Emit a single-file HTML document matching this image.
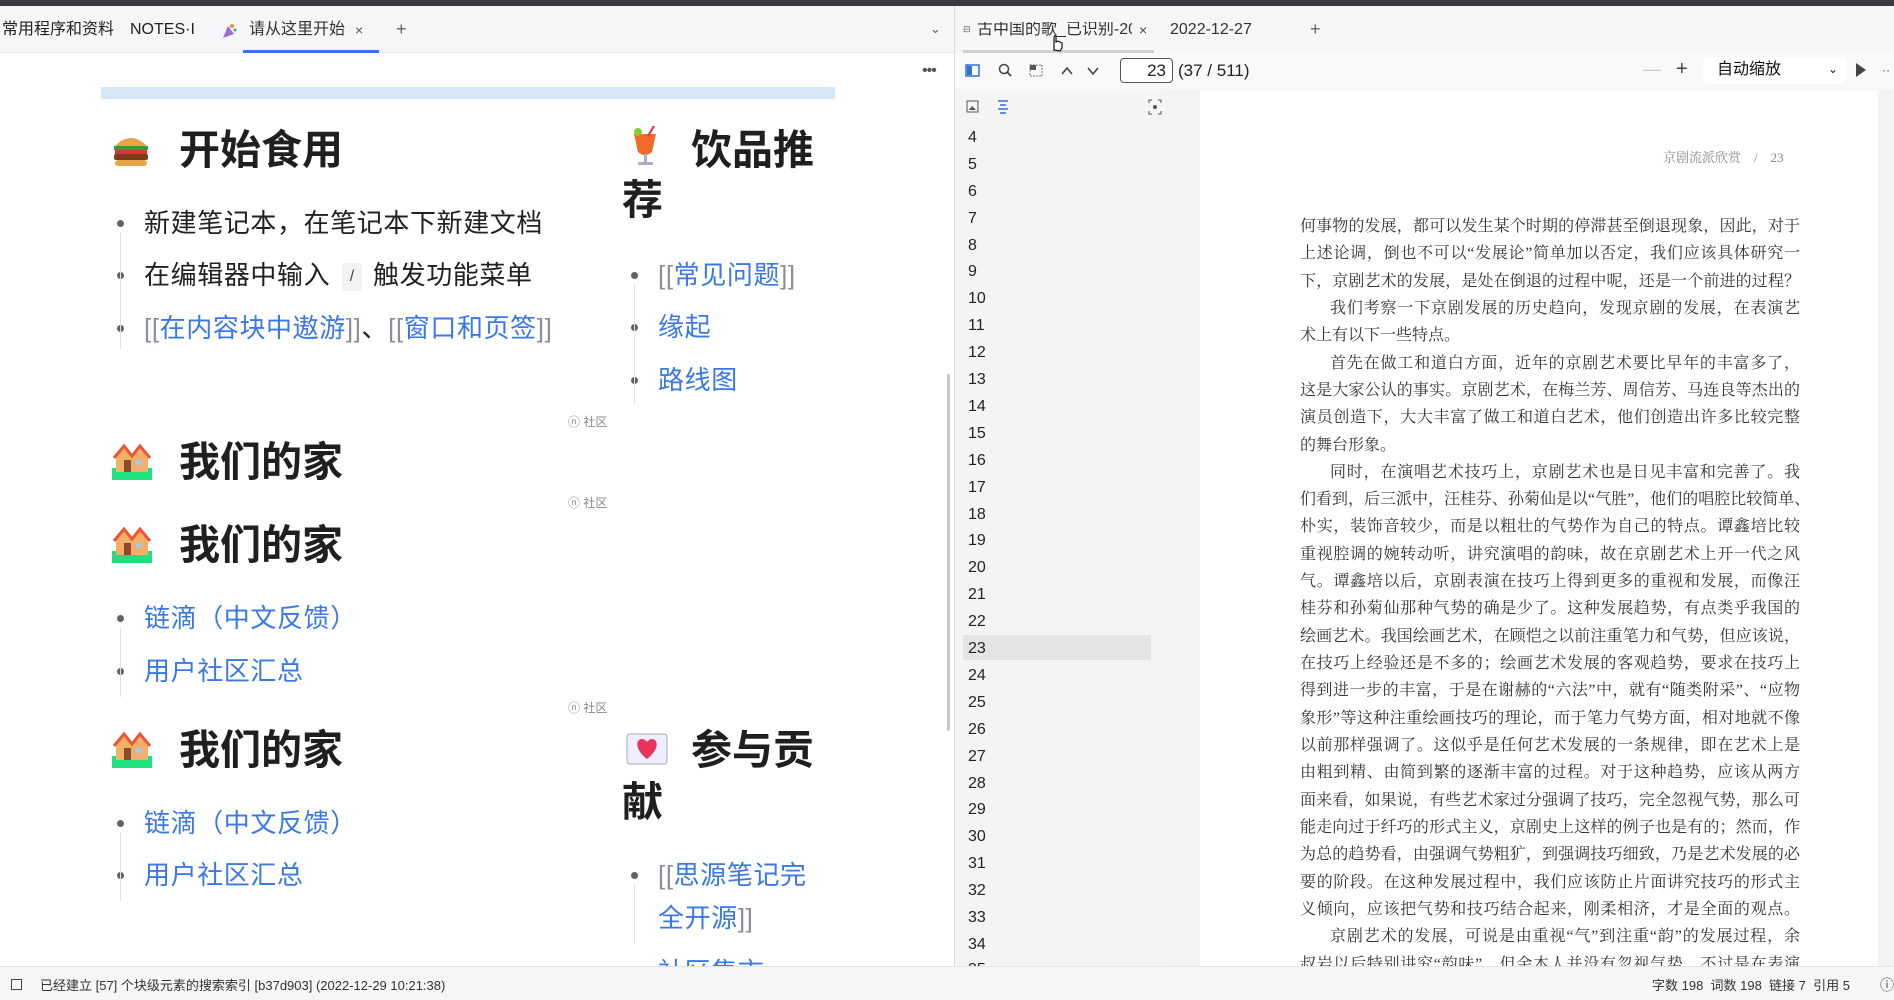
<!DOCTYPE html>
<html><head><meta charset="utf-8">
<style>
*{margin:0;padding:0;box-sizing:border-box}
body{width:1894px;height:1000px;overflow:hidden;background:#fff;font-family:"Liberation Sans","Noto Sans CJK SC",sans-serif;color:#202124;position:relative}
.a{position:absolute;white-space:nowrap;line-height:1}
.h{font-size:41px;font-weight:bold;color:#1f1f1f}
.b{font-size:26px;letter-spacing:0.6px;color:#202124;margin-top:2px}
.l{color:#3b78e7}
.br{color:#8a8f99}
.dot{position:absolute;width:7px;height:7px;border-radius:50%;background:#5f6368;margin-top:2px}
.vl{position:absolute;width:1px;background:#e3e3e3}
.cm{font-size:12px;color:#888}
.num{position:absolute;left:968px;font-size:16px;color:#222;line-height:1;margin-top:1px}
.pg{position:absolute;left:1300px;width:500px;font-family:"Liberation Serif","Noto Serif CJK SC",serif;font-size:16px;color:#333;line-height:1;text-align:justify;text-align-last:justify;white-space:nowrap;margin-top:2px}
.pg.s{text-align-last:left}
.t{margin-top:2px}
</style></head><body>
<div style="position:absolute;left:0;top:0;width:1894px;height:6px;background:#3a3b3f"></div>
<!-- left tab bar -->
<div style="position:absolute;left:0;top:6px;width:954px;height:47px;background:#f5f6f8;border-bottom:1px solid #e8e8e8"></div>
<div class="a t" style="left:2px;top:20px;font-size:16px;color:#222">常用程序和资料</div>
<div class="a t" style="left:130px;top:20px;font-size:16px;color:#222">NOTES·I</div>
<svg style="position:absolute;left:220px;top:22px" width="18" height="18" viewBox="0 0 18 18"><path d="M3 16 L8 4 L14 12 Z" fill="#9b6cd6"/><circle cx="12" cy="4" r="2" fill="#e84"/><circle cx="15" cy="8" r="1.5" fill="#4a8"/></svg>
<div class="a t" style="left:249px;top:20px;font-size:16px;color:#333">请从这里开始</div>
<div class="a t" style="left:355px;top:21px;font-size:14px;color:#555">×</div>
<div class="a t" style="left:396px;top:18px;font-size:18px;color:#666">+</div>
<div style="position:absolute;left:243px;top:50px;width:136px;height:3px;background:#3575f0"></div>
<div class="a t" style="left:930px;top:20px;font-size:13px;color:#555">⌄</div>
<div class="a" style="left:922px;top:63px;font-size:16px;color:#555;letter-spacing:-1px">•••</div>
<!-- left content -->
<div style="position:absolute;left:101px;top:87px;width:734px;height:12px;background:#d6e6f6"></div>

<svg style="position:absolute;left:112px;top:132px" width="38" height="36" viewBox="0 0 38 36"><path d="M3 14 Q19 -2 35 14 Z" fill="#e9a44a"/><rect x="2" y="14" width="34" height="4" fill="#3a9a3a"/><rect x="3" y="18" width="32" height="4" fill="#d33"/><rect x="2" y="22" width="34" height="6" rx="2" fill="#7a3e1e"/><rect x="3" y="28" width="32" height="6" rx="3" fill="#e9a44a"/></svg>
<div class="a h" style="left:179px;top:130px">开始食用</div>
<div class="dot" style="left:117px;top:218px"></div><div class="a b" style="left:144px;top:208px">新建笔记本，在笔记本下新建文档</div>
<div class="dot" style="left:117px;top:270px"></div><div class="a b" style="left:144px;top:260px">在编辑器中输入</div>
<div style="position:absolute;left:342px;top:263px;width:20px;height:28px;background:#f3f3f3;border-radius:3px;font-size:16px;color:#444;text-align:center;line-height:28px">/</div>
<div class="a b" style="left:373px;top:260px">触发功能菜单</div>
<div class="dot" style="left:117px;top:323px"></div><div class="a b" style="left:144px;top:313px"><span class="br">[[</span><span class="l">在内容块中遨游</span><span class="br">]]</span>、<span class="br">[[</span><span class="l">窗口和页签</span><span class="br">]]</span></div>
<div class="vl" style="left:120px;top:232px;height:118px"></div>

<svg style="position:absolute;left:630px;top:126px" width="30" height="42" viewBox="0 0 30 42"><path d="M4 8 L26 8 L22 26 Q15 32 8 26 Z" fill="#f26a2a"/><rect x="14" y="28" width="3" height="8" fill="#aac"/><rect x="8" y="36" width="15" height="3" rx="1" fill="#aac"/><circle cx="8" cy="6" r="4" fill="#8c3"/><path d="M18 10 L24 0" stroke="#d33" stroke-width="2"/></svg>
<div class="a h" style="left:691px;top:130px">饮品推</div>
<div class="a h" style="left:622px;top:180px">荐</div>
<div class="dot" style="left:631px;top:270px"></div><div class="a b" style="left:658px;top:260px"><span class="br">[[</span><span class="l">常见问题</span><span class="br">]]</span></div>
<div class="dot" style="left:631px;top:322px"></div><div class="a b l" style="left:658px;top:312px">缘起</div>
<div class="dot" style="left:631px;top:375px"></div><div class="a b l" style="left:658px;top:365px">路线图</div>
<div class="vl" style="left:634px;top:284px;height:120px"></div>

<div class="a cm" style="left:568px;top:416px">ⓝ 社区</div>
<svg style="position:absolute;left:112px;top:442px" width="40" height="38" viewBox="0 0 40 38"><rect x="0" y="26" width="40" height="12" fill="#1ee07e"/><path d="M4 16 L12 6 L20 16 L28 6 L36 16 L36 30 L4 30Z" fill="#f0b06a"/><path d="M2 16 L12 4 L20 14 L28 4 L38 16" stroke="#e53" stroke-width="3" fill="none"/><rect x="12" y="18" width="7" height="12" fill="#8b4a2b"/><rect x="24" y="18" width="5" height="5" fill="#9cf"/></svg>
<div class="a h" style="left:179px;top:442px">我们的家</div>
<div class="a cm" style="left:568px;top:497px">ⓝ 社区</div>
<svg style="position:absolute;left:112px;top:525px" width="40" height="38" viewBox="0 0 40 38"><rect x="0" y="26" width="40" height="12" fill="#1ee07e"/><path d="M4 16 L12 6 L20 16 L28 6 L36 16 L36 30 L4 30Z" fill="#f0b06a"/><path d="M2 16 L12 4 L20 14 L28 4 L38 16" stroke="#e53" stroke-width="3" fill="none"/><rect x="12" y="18" width="7" height="12" fill="#8b4a2b"/><rect x="24" y="18" width="5" height="5" fill="#9cf"/></svg>
<div class="a h" style="left:179px;top:525px">我们的家</div>
<div class="dot" style="left:117px;top:613px"></div><div class="a b l" style="left:144px;top:603px">链滴（中文反馈）</div>
<div class="dot" style="left:117px;top:666px"></div><div class="a b l" style="left:144px;top:656px">用户社区汇总</div>
<div class="vl" style="left:120px;top:627px;height:70px"></div>
<div class="a cm" style="left:568px;top:702px">ⓝ 社区</div>
<svg style="position:absolute;left:112px;top:730px" width="40" height="38" viewBox="0 0 40 38"><rect x="0" y="26" width="40" height="12" fill="#1ee07e"/><path d="M4 16 L12 6 L20 16 L28 6 L36 16 L36 30 L4 30Z" fill="#f0b06a"/><path d="M2 16 L12 4 L20 14 L28 4 L38 16" stroke="#e53" stroke-width="3" fill="none"/><rect x="12" y="18" width="7" height="12" fill="#8b4a2b"/><rect x="24" y="18" width="5" height="5" fill="#9cf"/></svg>
<div class="a h" style="left:179px;top:730px">我们的家</div>
<div class="dot" style="left:117px;top:818px"></div><div class="a b l" style="left:144px;top:808px">链滴（中文反馈）</div>
<div class="dot" style="left:117px;top:870px"></div><div class="a b l" style="left:144px;top:860px">用户社区汇总</div>
<div class="vl" style="left:120px;top:832px;height:70px"></div>

<svg style="position:absolute;left:626px;top:733px" width="42" height="32" viewBox="0 0 42 32"><rect x="1" y="1" width="40" height="30" rx="3" fill="#eef" stroke="#aab"/><path d="M21 26 C8 16 10 6 16 6 C19 6 21 9 21 9 C21 9 23 6 26 6 C32 6 34 16 21 26Z" fill="#e8365a"/></svg>
<div class="a h" style="left:691px;top:730px">参与贡</div>
<div class="a h" style="left:622px;top:782px">献</div>
<div class="dot" style="left:631px;top:870px"></div><div class="a b" style="left:658px;top:860px"><span class="br">[[</span><span class="l">思源笔记完</span></div>
<div class="a b" style="left:658px;top:903px"><span class="l">全开源</span><span class="br">]]</span></div>
<div class="a b l" style="left:658px;top:957px">社区集市</div>
<div class="vl" style="left:634px;top:884px;height:60px"></div>
<div style="position:absolute;left:947px;top:374px;width:3px;height:357px;background:#c8c8c8;border-radius:2px"></div>

<!-- divider -->
<div style="position:absolute;left:954px;top:6px;width:1px;height:960px;background:#dcdcdc"></div>
<!-- right tabs -->
<div style="position:absolute;left:955px;top:6px;width:939px;height:47px;background:#f5f6f8"></div>
<div class="a t" style="left:963px;top:23px;font-size:9px;color:#666">⊟</div>
<div class="a t" style="left:977px;top:20px;font-size:16px;color:#333;width:155px;overflow:hidden">古中国的歌_已识别-20</div>
<div class="a t" style="left:1139px;top:21px;font-size:14px;color:#444">×</div>
<div class="a t" style="left:1170px;top:20px;font-size:16px;color:#333">2022-12-27</div>
<div class="a t" style="left:1310px;top:18px;font-size:18px;color:#666">+</div>
<div style="position:absolute;left:963px;top:50px;width:191px;height:3px;background:#d0d0d0"></div>
<svg style="position:absolute;left:1050px;top:32px" width="14" height="20" viewBox="0 0 14 20"><path d="M4 18 L4 6 Q4 3 6 4 L6 10 L8 9 L10 10 L12 11 L12 16 L10 19Z" fill="#fff" stroke="#111" stroke-width="1.2"/></svg>
<!-- pdf toolbar -->
<div style="position:absolute;left:955px;top:53px;width:939px;height:36px;background:#f9f9fa"></div>
<svg style="position:absolute;left:964px;top:62px" width="150" height="18" viewBox="0 0 150 18">
<rect x="2" y="3" width="13" height="11" fill="none" stroke="#2f6fd6" stroke-width="1.5"/><rect x="3" y="4" width="5" height="9" fill="#2f6fd6"/>
<circle cx="40" cy="7" r="4.5" fill="none" stroke="#444" stroke-width="1.5"/><path d="M43 10 L47 14" stroke="#444" stroke-width="1.8"/>
<rect x="66" y="3" width="12" height="11" fill="none" stroke="#777" stroke-dasharray="2 1"/><rect x="66" y="3" width="6" height="5" fill="#555"/>
<path d="M98 12 L103 6 L108 12" stroke="#444" stroke-width="1.6" fill="none"/>
<path d="M124 6 L129 12 L134 6" stroke="#444" stroke-width="1.6" fill="none"/>
</svg>
<div style="position:absolute;left:1120px;top:58px;width:53px;height:25px;border:1px solid #555;border-radius:4px;background:#fff;font-size:17px;text-align:right;padding-right:6px;line-height:23px">23</div>
<div class="a" style="left:1178px;top:62px;font-size:17px;color:#222">(37 / 511)</div>
<div class="a" style="left:1643px;top:60px;font-size:18px;color:#ccc">—</div>
<div class="a" style="left:1676px;top:59px;font-size:20px;color:#444">+</div>
<div style="position:absolute;left:1703px;top:57px;width:143px;height:27px;background:#fff;border-radius:3px"></div>
<div class="a" style="left:1717px;top:62px;font-size:16px;color:#111">自动缩放</div>
<div class="a" style="left:1828px;top:63px;font-size:12px;color:#111">⌄</div>
<svg style="position:absolute;left:1855px;top:62px" width="12" height="16"><path d="M1 1 L11 8 L1 15Z" fill="#444"/></svg>
<div class="a" style="left:1882px;top:64px;font-size:12px;color:#444">··</div>
<!-- sidebar -->
<div style="position:absolute;left:955px;top:89px;width:245px;height:877px;background:#f4f4f5"></div>
<svg style="position:absolute;left:965px;top:98px" width="200" height="18" viewBox="0 0 200 18">
<rect x="2" y="3" width="11" height="11" fill="none" stroke="#555"/><path d="M4 12 L7 8 L11 12Z" fill="#555"/>
<path d="M33 3 H43 M35 7 H41 M33 11 H43 M35 15 H41" stroke="#2f6fd6" stroke-width="1.6"/>
<path d="M187 2 h-3 v3 M193 2 h3 v3 M187 16 h-3 v-3 M193 16 h3 v-3" stroke="#555" fill="none"/><circle cx="190" cy="9" r="2" fill="#555"/>
</svg>
<div style="position:absolute;left:1169px;top:143px;width:2px;height:44px;background:#c7c7c7"></div>
<div style="position:absolute;left:963px;top:635px;width:188px;height:25px;background:#e4e4e6"></div>
<div class="num" style="top:129px">4</div><div class="num" style="top:156px">5</div><div class="num" style="top:183px">6</div><div class="num" style="top:210px">7</div><div class="num" style="top:237px">8</div><div class="num" style="top:263px">9</div><div class="num" style="top:290px">10</div><div class="num" style="top:317px">11</div><div class="num" style="top:344px">12</div><div class="num" style="top:371px">13</div><div class="num" style="top:398px">14</div><div class="num" style="top:425px">15</div><div class="num" style="top:452px">16</div><div class="num" style="top:479px">17</div><div class="num" style="top:506px">18</div><div class="num" style="top:532px">19</div><div class="num" style="top:559px">20</div><div class="num" style="top:586px">21</div><div class="num" style="top:613px">22</div><div class="num" style="top:640px">23</div><div class="num" style="top:667px">24</div><div class="num" style="top:694px">25</div><div class="num" style="top:721px">26</div><div class="num" style="top:748px">27</div><div class="num" style="top:775px">28</div><div class="num" style="top:801px">29</div><div class="num" style="top:828px">30</div><div class="num" style="top:855px">31</div><div class="num" style="top:882px">32</div><div class="num" style="top:909px">33</div><div class="num" style="top:936px">34</div><div class="num" style="top:961px">35</div>
<!-- pdf area -->
<div style="position:absolute;left:1166px;top:89px;width:728px;height:877px;background:#f3f3f4"></div>
<div style="position:absolute;left:1200px;top:90px;width:678px;height:876px;background:#fff"></div>
<div class="a" style="left:1663px;top:151px;font-size:13px;color:#888;font-family:'Liberation Serif','Noto Serif CJK SC',serif">京剧流派欣赏　/　23</div>
<div class="pg" style="top:217px">何事物的发展，都可以发生某个时期的停滞甚至倒退现象，因此，对于</div>
<div class="pg" style="top:244px">上述论调，倒也不可以“发展论”简单加以否定，我们应该具体研究一</div>
<div class="pg" style="top:272px">下，京剧艺术的发展，是处在倒退的过程中呢，还是一个前进的过程？</div>
<div class="pg" style="top:299px;left:1330px;width:470px">我们考察一下京剧发展的历史趋向，发现京剧的发展，在表演艺</div>
<div class="pg s" style="top:326px">术上有以下一些特点。</div>
<div class="pg" style="top:354px;left:1330px;width:470px">首先在做工和道白方面，近年的京剧艺术要比早年的丰富多了，</div>
<div class="pg" style="top:381px">这是大家公认的事实。京剧艺术，在梅兰芳、周信芳、马连良等杰出的</div>
<div class="pg" style="top:408px">演员创造下，大大丰富了做工和道白艺术，他们创造出许多比较完整</div>
<div class="pg s" style="top:436px">的舞台形象。</div>
<div class="pg" style="top:463px;left:1330px;width:470px">同时，在演唱艺术技巧上，京剧艺术也是日见丰富和完善了。我</div>
<div class="pg" style="top:490px">们看到，后三派中，汪桂芬、孙菊仙是以“气胜”，他们的唱腔比较简单、</div>
<div class="pg" style="top:517px">朴实，装饰音较少，而是以粗壮的气势作为自己的特点。谭鑫培比较</div>
<div class="pg" style="top:545px">重视腔调的婉转动听，讲究演唱的韵味，故在京剧艺术上开一代之风</div>
<div class="pg" style="top:572px">气。谭鑫培以后，京剧表演在技巧上得到更多的重视和发展，而像汪</div>
<div class="pg" style="top:599px">桂芬和孙菊仙那种气势的确是少了。这种发展趋势，有点类乎我国的</div>
<div class="pg" style="top:627px">绘画艺术。我国绘画艺术，在顾恺之以前注重笔力和气势，但应该说，</div>
<div class="pg" style="top:654px">在技巧上经验还是不多的；绘画艺术发展的客观趋势，要求在技巧上</div>
<div class="pg" style="top:681px">得到进一步的丰富，于是在谢赫的“六法”中，就有“随类附采”、“应物</div>
<div class="pg" style="top:709px">象形”等这种注重绘画技巧的理论，而于笔力气势方面，相对地就不像</div>
<div class="pg" style="top:736px">以前那样强调了。这似乎是任何艺术发展的一条规律，即在艺术上是</div>
<div class="pg" style="top:763px">由粗到精、由简到繁的逐渐丰富的过程。对于这种趋势，应该从两方</div>
<div class="pg" style="top:791px">面来看，如果说，有些艺术家过分强调了技巧，完全忽视气势，那么可</div>
<div class="pg" style="top:818px">能走向过于纤巧的形式主义，京剧史上这样的例子也是有的；然而，作</div>
<div class="pg" style="top:845px">为总的趋势看，由强调气势粗犷，到强调技巧细致，乃是艺术发展的必</div>
<div class="pg" style="top:873px">要的阶段。在这种发展过程中，我们应该防止片面讲究技巧的形式主</div>
<div class="pg" style="top:900px">义倾向，应该把气势和技巧结合起来，刚柔相济，才是全面的观点。</div>
<div class="pg" style="top:927px;left:1330px;width:470px">京剧艺术的发展，可说是由重视“气”到注重“韵”的发展过程，余</div>
<div class="pg" style="top:955px">叔岩以后特别讲究“韵味”，但余本人并没有忽视气势，不过是在表演</div>
<!-- status bar -->
<div style="position:absolute;left:0;top:966px;width:1894px;height:34px;background:#f5f6f8;border-top:1px solid #e3e3e3"></div>
<div style="position:absolute;left:11px;top:979px;width:11px;height:11px;border:1.5px solid #444"></div>
<div class="a" style="left:40px;top:979px;font-size:13px;color:#333">已经建立 [57] 个块级元素的搜索索引 [b37d903] (2022-12-29 10:21:38)</div>
<div class="a" style="left:1652px;top:979px;font-size:13px;color:#333">字数 198&nbsp; 词数 198&nbsp; 链接 7&nbsp; 引用 5</div>
<div class="a" style="left:1880px;top:978px;font-size:14px;color:#444">ⓘ</div>
</body></html>
